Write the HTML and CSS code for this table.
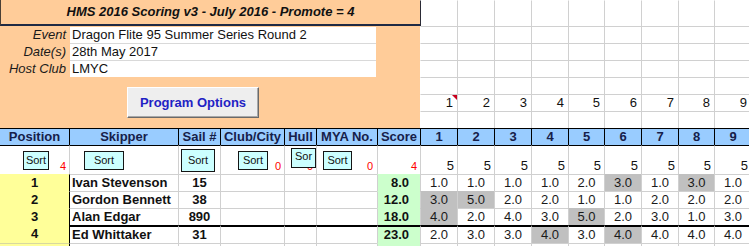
FILE: index.html
```html
<!DOCTYPE html>
<html>
<head>
<meta charset="utf-8">
<link rel="stylesheet" href="styles.css">
</head>
<body>
<div class="sheet">
  <div class="top">
    <div class="panel">
      <div class="title">HMS 2016 Scoring v3 - July 2016 - Promote = 4</div>
      <div class="info">
        <div class="info-row"><span class="lbl">Event</span><span class="fld fld-first">Dragon Flite 95 Summer Series Round 2</span></div>
        <div class="info-row"><span class="lbl">Date(s)</span><span class="fld">28th May 2017</span></div>
        <div class="info-row"><span class="lbl">Host Club</span><span class="fld">LMYC</span></div>
      </div>
      <div class="btn-area"><div class="prog-btn">Program Options</div></div>
    </div>
    <div class="topgrid">
      <div class="g edge"></div><div class="g"></div><div class="g"></div><div class="g"></div><div class="g"></div><div class="g"></div><div class="g"></div><div class="g"></div><div class="g"></div>
      <div class="g"></div><div class="g"></div><div class="g"></div><div class="g"></div><div class="g"></div><div class="g"></div><div class="g"></div><div class="g"></div><div class="g"></div>
      <div class="g"></div><div class="g"></div><div class="g"></div><div class="g"></div><div class="g"></div><div class="g"></div><div class="g"></div><div class="g"></div><div class="g"></div>
      <div class="g"></div><div class="g"></div><div class="g"></div><div class="g"></div><div class="g"></div><div class="g"></div><div class="g"></div><div class="g"></div><div class="g"></div>
      <div class="g"></div><div class="g"></div><div class="g"></div><div class="g"></div><div class="g"></div><div class="g"></div><div class="g"></div><div class="g"></div><div class="g"></div>
      <div class="g n"><span class="flag"></span>1</div><div class="g n">2</div><div class="g n">3</div><div class="g n">4</div><div class="g n">5</div><div class="g n">6</div><div class="g n">7</div><div class="g n">8</div><div class="g n">9</div>
      <div class="g"></div><div class="g"></div><div class="g"></div><div class="g"></div><div class="g"></div><div class="g"></div><div class="g"></div><div class="g"></div><div class="g"></div>
    </div>
  </div>

  <div class="tbl">
    <!-- header -->
    <div class="c h first">Position</div>
    <div class="c h">Skipper</div>
    <div class="c h">Sail #</div>
    <div class="c h">Club/City</div>
    <div class="c h">Hull</div>
    <div class="c h">MYA No.</div>
    <div class="c h">Score</div>
    <div class="c h">1</div><div class="c h">2</div><div class="c h">3</div><div class="c h">4</div><div class="c h">5</div><div class="c h">6</div><div class="c h">7</div><div class="c h">8</div><div class="c h">9</div>

    <!-- sort row -->
    <div class="c s first"><div class="sort sp">Sort</div><span class="red">4</span></div>
    <div class="c s"><div class="sort sk">Sort</div></div>
    <div class="c s"><div class="sort sl">Sort</div></div>
    <div class="c s"><div class="sort sc">Sort</div><span class="red">0</span></div>
    <div class="c s"><span class="red">0</span><div class="sort sh">Sort</div></div>
    <div class="c s"><div class="sort sm">Sort</div><span class="red red-wide">0</span></div>
    <div class="c s"><span class="red">4</span></div>
    <div class="c s"><span class="five">5</span></div><div class="c s"><span class="five">5</span></div><div class="c s"><span class="five">5</span></div><div class="c s"><span class="five">5</span></div><div class="c s"><span class="five">5</span></div><div class="c s"><span class="five">5</span></div><div class="c s"><span class="five">5</span></div><div class="c s"><span class="five">5</span></div><div class="c s"><span class="five">5</span></div>

    <!-- row 1 -->
    <div class="c first pos">1</div>
    <div class="c skp">Ivan Stevenson</div>
    <div class="c sail">15</div>
    <div class="c"></div><div class="c"></div><div class="c"></div>
    <div class="c score">8.0</div>
    <div class="c rv">1.0</div><div class="c rv">1.0</div><div class="c rv">1.0</div><div class="c rv">1.0</div><div class="c rv">2.0</div><div class="c rv disc">3.0</div><div class="c rv">1.0</div><div class="c rv disc">3.0</div><div class="c rv">1.0</div>

    <!-- row 2 -->
    <div class="c first pos">2</div>
    <div class="c skp">Gordon Bennett</div>
    <div class="c sail">38</div>
    <div class="c"></div><div class="c"></div><div class="c"></div>
    <div class="c score">12.0</div>
    <div class="c rv disc">3.0</div><div class="c rv disc">5.0</div><div class="c rv">2.0</div><div class="c rv">2.0</div><div class="c rv">1.0</div><div class="c rv">1.0</div><div class="c rv">2.0</div><div class="c rv">2.0</div><div class="c rv">2.0</div>

    <!-- row 3 -->
    <div class="c first pos">3</div>
    <div class="c skp">Alan Edgar</div>
    <div class="c sail">890</div>
    <div class="c"></div><div class="c"></div><div class="c"></div>
    <div class="c score">18.0</div>
    <div class="c rv disc">4.0</div><div class="c rv">2.0</div><div class="c rv">4.0</div><div class="c rv">3.0</div><div class="c rv disc">5.0</div><div class="c rv">2.0</div><div class="c rv">3.0</div><div class="c rv">1.0</div><div class="c rv">3.0</div>

    <!-- row 4 -->
    <div class="c first pos">4</div>
    <div class="c skp thick">Ed Whittaker</div>
    <div class="c sail thick">31</div>
    <div class="c thick"></div><div class="c thick"></div><div class="c thick"></div>
    <div class="c score thick">23.0</div>
    <div class="c rv thick">2.0</div><div class="c rv thick">3.0</div><div class="c rv thick">3.0</div><div class="c rv thick disc">4.0</div><div class="c rv thick">3.0</div><div class="c rv thick disc">4.0</div><div class="c rv thick">4.0</div><div class="c rv thick">4.0</div><div class="c rv thick">4.0</div>

    <!-- row 5 (partial) -->
    <div class="c first pos pos-next"></div>
    <div class="c skp"></div>
    <div class="c"></div>
    <div class="c"></div><div class="c"></div><div class="c"></div>
    <div class="c score"></div>
    <div class="c"></div><div class="c"></div><div class="c"></div><div class="c"></div><div class="c"></div><div class="c"></div><div class="c"></div><div class="c"></div><div class="c"></div>
  </div>
</div>
</body>
</html>
```

FILE: styles.css
```css
html, body {
  margin: 0;
  padding: 0;
  overflow: hidden;
  background: #ffffff;
}

body {
  font-family: "Liberation Sans", Arial, sans-serif;
  font-size: 13px;
  color: #111111;
}

.sheet {
  width: 751px;
}

/* ---------- top area ---------- */
.top {
  display: flex;
  height: 128px;
}

.panel {
  width: 420px;
  flex: none;
  background: #ffcc99;
  display: flex;
  flex-direction: column;
}

.title {
  height: 26px;
  box-sizing: border-box;
  border-left: 1px solid #4a3f35;
  border-bottom: 2px solid #1f2a44;
  font-weight: bold;
  font-style: italic;
  text-align: center;
  line-height: 24px;
  color: #111111;
}

.info {
  display: flex;
  flex-direction: column;
}

.info-row {
  display: flex;
  height: 17px;
}

.lbl {
  width: 66px;
  text-align: right;
  font-style: italic;
  line-height: 17px;
  color: #1a1a1a;
}

.fld {
  margin-left: 4px;
  width: 306px;
  box-sizing: border-box;
  background: #ffffff;
  border-top: 1px solid #d9d9d9;
  padding-left: 2px;
  line-height: 16px;
  color: #111111;
}

.fld-first {
  border-top-color: #ffcc99;
}

.btn-area {
  padding: 10px 0 0 127px;
}

.prog-btn {
  width: 132px;
  height: 31px;
  box-sizing: border-box;
  background: #eeeeee;
  border: 1px solid;
  border-color: #ffffff #6a6a6a #6a6a6a #ffffff;
  box-shadow: inset -1px -1px 0 #a8a8a8;
  display: flex;
  align-items: center;
  justify-content: center;
  font-weight: bold;
  color: #1f22c4;
}

.topgrid {
  display: grid;
  grid-template-columns: 37px 37px 37px 37px 36px 37px 37px 36px 37px;
  grid-template-rows: 26px repeat(6, 17px);
  background: #ffffff;
}

.g {
  box-sizing: border-box;
  border-left: 1px solid #d0d0d0;
  border-top: 1px solid #d0d0d0;
}

.topgrid > .g:nth-child(9n+1) {
  border-left-color: transparent;
}

.topgrid > .g:nth-child(-n+9) {
  border-top-color: transparent;
}

.topgrid > .g.edge {
  border-left: 1px solid #2a2a35;
}

.n {
  position: relative;
  text-align: right;
  padding-right: 4px;
  line-height: 16px;
}

.flag {
  position: absolute;
  top: 0;
  right: 0;
  width: 0;
  height: 0;
  border-top: 5px solid #c8001e;
  border-left: 5px solid transparent;
}

/* ---------- table ---------- */
.tbl {
  display: grid;
  grid-template-columns: 69px 109px 42px 64px 32px 61px 43px 37px 37px 37px 37px 36px 37px 37px 36px 37px;
  grid-template-rows: 17px 29px 17px 17px 17px 18px 17px;
}

.c {
  box-sizing: border-box;
  border-left: 1px solid #d0d0d0;
  border-top: 1px solid #d0d0d0;
  white-space: nowrap;
  overflow: hidden;
  line-height: 16px;
}

.c.first {
  border-left: none;
}

.h {
  background: #99ccff;
  border-top-color: #000000;
  border-left-color: #000000;
  font-weight: bold;
  text-align: center;
  color: #16204a;
}

.s {
  position: relative;
  overflow: visible;
  border-top-color: #000000;
  display: flex;
  justify-content: flex-end;
  align-items: flex-end;
}

.red {
  color: #ff0000;
  font-size: 11px;
  line-height: 12px;
  padding: 0 3px 2px 0;
}

.red-wide {
  padding-right: 4px;
}

.five {
  line-height: 15px;
  padding: 0 3px 1px 0;
}

.sort {
  position: absolute;
  box-sizing: border-box;
  background: #ccffff;
  border: 1px solid #151515;
  font-size: 11px;
  line-height: 16px;
  text-align: center;
  color: #111111;
  height: 19px;
  overflow: hidden;
}

.sp { left: 23px; top: 5px; width: 26px; }
.sk { left: 14px; top: 5px; width: 40px; }
.sl { left: 2px; top: 3px; width: 34px; height: 23px; line-height: 20px; }
.sc { left: 17px; top: 5px; width: 30px; }
.sh {
  left: 6px;
  top: 2px;
  width: 25px;
  height: 20px;
  padding: 0 2px;
  white-space: normal;
  word-break: break-all;
  line-height: 15px;
}
.sm { left: 6px; top: 5px; width: 29px; }

.pos {
  background: #ffff99;
  border-top-color: transparent;
  font-weight: bold;
  text-align: center;
}

.pos-next {
  border-top-color: #d8d8a0;
}

.skp {
  font-weight: bold;
  padding-left: 2px;
  border-left-color: #000000;
}

.sail {
  font-weight: bold;
  text-align: center;
}

.score {
  background: #ccffcc;
  border-top-color: transparent;
  font-weight: bold;
  text-align: right;
  padding-right: 11px;
}

.rv {
  text-align: center;
  color: #1a1a1a;
}

.disc {
  background: #c0c0c0;
  border-top-color: transparent;
}

.thick {
  border-top: 2px solid #000000;
}
```
